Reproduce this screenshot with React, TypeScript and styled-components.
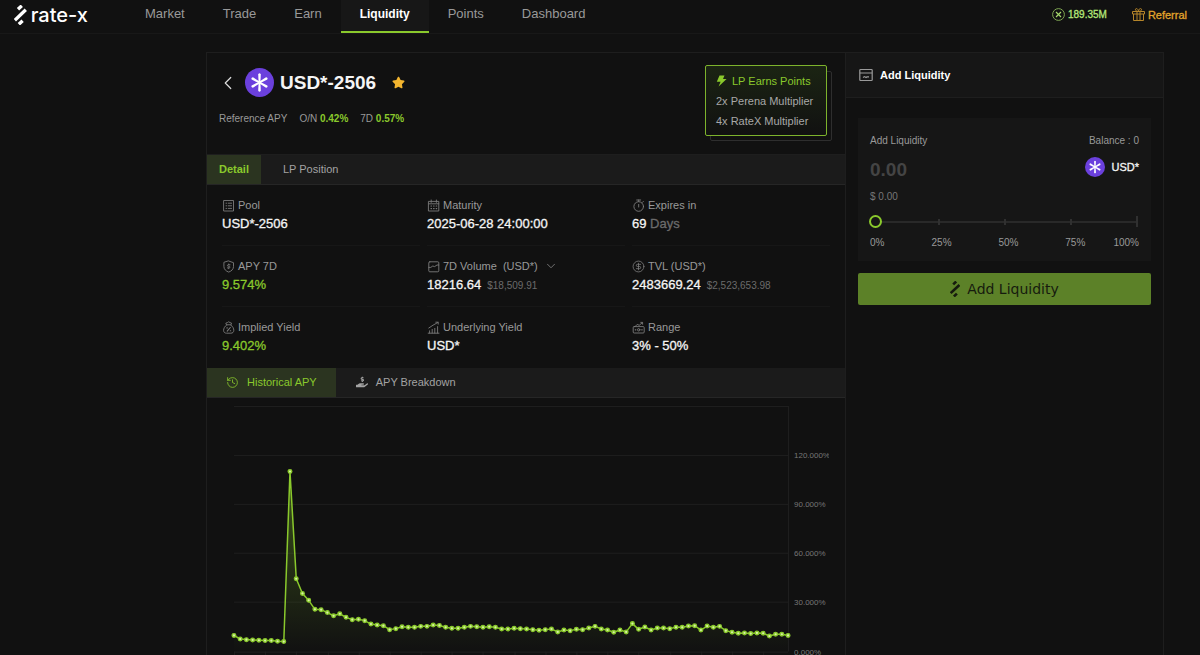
import React, { useState } from "react";
import styled, { createGlobalStyle } from "styled-components";
import { ChevronDown, ChevronLeft, CircleDollarSign, History } from "lucide-react";
import { FaHandHoldingUsd, FaStar } from "react-icons/fa";

const color = {
  page: "#111111",
  panel: "#161616",
  bar: "#1b1b1b",
  line: "#1e1e1e",
  faint: "#171717",
  green: "#8ac92c",
  text: "#999999",
  dim: "#6b6b6b",
  white: "#f5f5f5",
};

const GlobalStyle = createGlobalStyle`
  * { box-sizing: border-box; }
  body {
    margin: 0;
    background: ${color.page};
    color: ${color.text};
    font-family: "Liberation Sans", Arial, sans-serif;
    font-size: 11px;
    line-height: 16px;
  }
  button, input { font: inherit; color: inherit; margin: 0; }
  button { border: 0; padding: 0; background: none; cursor: pointer; }
  a { color: inherit; text-decoration: none; }
  h1, h2, dl, dd, dt, p, ul { margin: 0; padding: 0; font: inherit; }
  svg { flex: none; display: block; }
`;

const Shell = styled.div`
  height: 100vh;
  overflow: hidden;
`;

const TopBar = styled.header`
  display: flex;
  height: 34px;
  border-bottom: 1px solid #181818;
`;

const Brand = styled.a`
  display: flex;
  align-items: center;
  gap: 4px;
  width: 126px;
  padding: 0 0 4px 14px;
  color: #ffffff;
  font: 500 20px/24px Inter, sans-serif;
`;

const Nav = styled.nav`
  display: flex;
  flex: 1;
`;

const NavLink = styled.a<{ $active?: boolean }>`
  display: flex;
  align-items: center;
  padding: 0 19px ${(p) => (p.$active ? 3 : 5)}px;
  font-size: ${(p) => (p.$active ? 12 : 13)}px;
  font-weight: ${(p) => (p.$active ? 700 : 400)};
  color: ${(p) => (p.$active ? "#ffffff" : color.text)};
  background: ${(p) => (p.$active ? "#171717" : "none")};
  border-bottom: ${(p) => (p.$active ? `2px solid ${color.green}` : "0")};
`;

const Account = styled.div`
  display: flex;
  align-items: center;
  gap: 25px;
  padding: 0 13px 4px 0;
`;

const AccountItem = styled.a<{ $tone: string; $size: number }>`
  display: flex;
  align-items: center;
  gap: 3px;
  color: ${(p) => p.$tone};
  font-size: ${(p) => p.$size}px;
  -webkit-text-stroke: 0.3px;
`;

const Main = styled.main`
  display: grid;
  grid-template-columns: minmax(0, 1fr) 318px;
  margin: 18px 36px 0 206px;
  min-height: 100vh;
  border: 1px solid ${color.line};
`;

const PoolColumn = styled.section`
  min-width: 0;
`;

const PoolHeader = styled.div`
  display: flex;
  justify-content: space-between;
  padding: 12px 13px 13px 12px;
  height: 102px;
  border-bottom: 1px solid ${color.line};
`;

const TitleRow = styled.div`
  display: flex;
  align-items: center;
  height: 35px;
`;

const BackButton = styled.button`
  display: flex;
  justify-content: center;
  width: 18px;
  margin-right: 8px;
  color: #dddddd;
`;

const PoolName = styled.h1`
  margin: 0 16px 0 6px;
  color: ${color.white};
  font-size: 19px;
  line-height: 24px;
  font-weight: 700;
`;

const RateRow = styled.p`
  display: flex;
  gap: 12px;
  margin-top: 11px;
  font-size: 10px;
`;

const Rate = styled.b`
  color: ${color.green};
`;

const PointsBox = styled.div`
  position: relative;
  align-self: flex-start;
  min-width: 122px;
  margin-right: 5px;
  height: 71px;
  padding: 5px 10px;
  border: 1px solid #7db32c;
  border-radius: 2px;
  background: linear-gradient(#1b2413, ${color.page});
  line-height: 20px;
  color: #a8a8a8;

  &::after {
    content: "";
    position: absolute;
    z-index: -1;
    inset: 5px -6px -6px 4px;
    border: 1px solid #2e2e2e;
    border-radius: 2px;
  }
`;

const PointsTitle = styled.p`
  display: flex;
  align-items: center;
  gap: 5px;
  color: ${color.green};
`;

const TabBar = styled.div`
  display: flex;
  height: 30px;
  background: ${color.bar};
  border-bottom: 1px solid #262626;
`;

const Tab = styled.button<{ $active?: boolean; $pad: number; $bold?: boolean }>`
  display: flex;
  align-items: center;
  gap: 8px;
  padding: 0 ${(p) => p.$pad}px 1px;
  color: ${(p) => (p.$active ? color.green : "#a3a3a3")};
  background: ${(p) => (p.$active ? "#2b3420" : "none")};
  font-weight: ${(p) => (p.$bold ? 700 : 400)};
`;

const Facts = styled.dl`
  display: grid;
  grid-template-columns: repeat(3, 1fr);
  column-gap: 7px;
  padding: 0 15px;
`;

const Fact = styled.div<{ $last?: boolean }>`
  height: 61px;
  padding-top: 12px;
  border-bottom: 1px solid ${(p) => (p.$last ? "transparent" : color.faint)};
`;

const FactLabel = styled.dt`
  display: flex;
  align-items: center;
  gap: 3px;
  color: ${color.text};
  white-space: pre;
`;

const FactValue = styled.dd<{ $green?: boolean }>`
  font-size: 13px;
  line-height: 22px;
  color: ${(p) => (p.$green ? color.green : color.white)};
  -webkit-text-stroke: 0.3px;
`;

const Unit = styled.span`
  color: ${color.dim};
`;

const Fiat = styled.span`
  margin-left: 6px;
  font-size: 10px;
  color: ${color.dim};
  -webkit-text-stroke: 0;
`;

const ChartSvg = styled.svg`
  width: 100%;
  font-size: 8px;
`;

const SideColumn = styled.aside`
  border-left: 1px solid ${color.line};
`;

const SideHeader = styled.div`
  display: flex;
  align-items: center;
  gap: 7px;
  height: 45px;
  padding: 0 13px;
  background: ${color.panel};
  border-bottom: 1px solid ${color.line};
`;

const SideTitle = styled.h2`
  color: #ffffff;
  font-weight: 700;
`;

const Form = styled.form`
  padding: 20px 12px;
`;

const Card = styled.div`
  padding: 15px 12px 10px;
  background: ${color.panel};
  font-size: 10px;
`;

const Split = styled.div`
  display: flex;
  justify-content: space-between;
`;

const AmountInput = styled.input`
  width: 140px;
  height: 28px;
  margin-top: 7px;
  padding: 0;
  border: 0;
  outline: 0;
  background: none;
  font-size: 19px;
  font-weight: 700;
  color: ${color.white};

  &::placeholder { color: #444444; opacity: 1; }
`;

const Token = styled.span`
  display: flex;
  align-items: center;
  gap: 6px;
  height: 22px;
  margin-top: 7px;
  color: ${color.white};
  font-size: 11px;
  -webkit-text-stroke: 0.3px;
`;

const FiatLine = styled.p`
  margin: 5px 0 8px;
  color: #777777;
`;

const SliderWrap = styled.div`
  display: grid;
  align-items: center;
  height: 17px;
  margin-left: -1px;

  > * { grid-area: 1 / 1; }
`;

const Ticks = styled.div`
  display: flex;
  align-items: center;
  justify-content: space-between;
  height: 2px;
  margin: 0 1px 0 3px;
  background: #292929;
`;

const Tick = styled.i<{ $height: number }>`
  width: 2px;
  height: ${(p) => p.$height}px;
  background: #303030;
`;

const Slider = styled.input`
  appearance: none;
  width: 100%;
  height: 17px;
  background: none;
  cursor: pointer;

  &::-webkit-slider-thumb {
    appearance: none;
    width: 13px;
    height: 13px;
    border: 2px solid ${color.green};
    border-radius: 50%;
    background: ${color.panel};
  }
`;

const Marks = styled.div`
  display: grid;
  grid-template-columns: 23fr 25fr 25fr 18fr auto;
  margin-top: 5px;
`;

const Submit = styled.button`
  display: flex;
  align-items: center;
  justify-content: center;
  gap: 7px;
  width: 100%;
  height: 32px;
  margin-top: 12px;
  border-radius: 2px;
  background: #5c8128;
  color: #161b0e;
  font: 14px/20px "DejaVu Sans", sans-serif;
`;

function BrandMark({ size }: { size: number }) {
  return (
    <svg width={(size * 12) / 19} height={size} viewBox="0 0 12 19" fill="none" stroke="currentColor" strokeWidth="3.2">
      <path d="M.8 14.400 11.200 4.600M3.800 4 7.400.7M4.600 18.300 8.200 15" />
    </svg>
  );
}

function TokenIcon({ size }: { size: number }) {
  return (
    <svg width={size} height={size} viewBox="0 0 29 29">
      <circle cx="14.5" cy="14.5" r="14.5" fill="#6b40dd" />
      <g fill="#ffffff">
        {[0, 60, 120, 180, 240, 300].map((angle) => (
          <path key={angle} transform={`rotate(${angle} 14.5 14.5)`} d="M13.600 14.500 13.200 6.200Q14.500 4.400 15.800 6.200L15.400 14.500Z" />
        ))}
      </g>
    </svg>
  );
}

function LineIcon({ children }: { children: React.ReactNode }) {
  return (
    <svg width="13" height="13" viewBox="0 0 13 13" fill="none" stroke="#7c7c7c" strokeWidth="0.9" strokeLinecap="round" strokeLinejoin="round">
      {children}
    </svg>
  );
}

const PoolIcon = () => (
  <LineIcon>
    <rect x="2" y="1.5" width="9.5" height="10.5" />
    <path d="M4 4.2h.6M4 6.8h.6M4 9.4h.6M6.2 4.2h3.4M6.2 6.8h3.4M6.2 9.4h3.4" />
  </LineIcon>
);
const CalendarIcon = () => (
  <LineIcon>
    <rect x="1.8" y="2.4" width="10" height="9.6" />
    <path d="M4.2 1v2.4M9.4 1v2.4M1.8 4.8h10" />
    <path d="M4 7h.5M6.6 7h.5M9.2 7h.5M4 9.6h.5M6.6 9.6h.5M9.2 9.6h.5" strokeWidth="1.2" />
  </LineIcon>
);
const TimerIcon = () => (
  <LineIcon>
    <circle cx="6.7" cy="7.5" r="4.8" />
    <path d="M4.7 1h4M6.7 1v1.6M10.4 3.4l1-1M6.7 5.4v2.6" />
  </LineIcon>
);
const ShieldIcon = () => (
  <LineIcon>
    <path d="M6.700 1 11.500 2.700v3.800c0 2.700-2 4.600-4.800 5.600C3.900 11.100 1.900 9.200 1.900 6.500V2.700Z" />
    <path d="M8 4.800H6.200c-1 0-1 1.500 0 1.500h1c1 0 1 1.600 0 1.600H5.500M6.700 4v.8M6.700 8v.7" />
  </LineIcon>
);
const VolumeIcon = () => (
  <LineIcon>
    <rect x="1.800" y="1.800" width="10" height="10" rx="1" />
    <path d="M1.800 7.400h2l2-1.400 1.800.6 2.400-1.600h1.800" />
  </LineIcon>
);
const BagIcon = () => (
  <LineIcon>
    <path d="M4.600 4C2.600 5.500 1.600 7.500 1.600 9.300c0 1.800 1.100 2.900 3 2.900h4.200c1.900 0 3-1.100 3-2.900C11.800 7.500 10.800 5.500 8.800 4ZM4.600 4 3.800 2.200 5.400 1.600 6.700.8 8 1.600l1.600.6L8.800 4" />
    <path d="M8.300 6.500 5.200 10.200M4.900 6.900h.4M8.300 9.800h.4" strokeWidth="1.100" />
  </LineIcon>
);
const GrowthIcon = () => (
  <LineIcon>
    <path d="M1.200 12.200h10.800M2.600 12V9.800M5.200 12V8.400M7.800 12V7.400M10.600 12V5.600M1.800 7 6 4.200 11 1.400M8.800 1.200h2.400v2" />
  </LineIcon>
);
const RangeIcon = () => (
  <LineIcon>
    <rect x="1.200" y="5.600" width="11" height="6.400" rx="1" />
    <path d="M3.200 5.400 5.200 3.400l2 .9 3-2.500M8.800 1.400h1.800v1.800" />
    <circle cx="6.700" cy="8.800" r="1.200" />
    <path d="M3.300 8.800h.5M9.700 8.800h.5" strokeWidth="1.200" />
  </LineIcon>
);

const history = [
  9.9, 7.7, 7.3, 7.1, 6.9, 6.7, 6.7, 6.3, 6.1, 110, 44.5, 35.5, 31.3, 25.8, 25.6, 23.8, 21.9, 23.1, 20.9, 19.5,
  19.7, 18.9, 16.8, 16.2, 15.8, 13.4, 14, 15.2, 14.8, 14.8, 15.4, 15.4, 16.2, 16, 14.8, 14.2, 14.2, 14.8, 15.4, 15.2,
  14.8, 15.2, 14.8, 13.8, 13.8, 14.2, 14, 13.8, 13.4, 13, 13.4, 13.8, 12, 13.2, 12.8, 13.6, 13.4, 14.4, 15.4, 13.8,
  13.2, 11.8, 13.2, 12, 17.1, 13.6, 15, 13.2, 14.4, 14.4, 14, 14.8, 14.8, 15.6, 15.8, 13.2, 15.6, 14.8, 15.4, 12.8,
  11.8, 11.2, 11.4, 11, 11.4, 11.2, 9.5, 10.6, 10.6, 9.9,
];

const plot = { left: 27, right: 582, top: 8, bottom: 254, max: 150 };

function HistoryChart() {
  const x = (i: number) => plot.left + ((plot.right - plot.left) * i) / (history.length - 1);
  const y = (v: number) => plot.bottom - ((plot.bottom - plot.top) * v) / plot.max;
  const line = history.map((v, i) => `${x(i).toFixed(1)},${y(v).toFixed(1)}`).join(" ");
  const gridY = (v: number) => Math.floor(y(v)) + 0.5;

  return (
    <ChartSvg viewBox="0 0 639 280" role="img" aria-label="Historical APY">
      <defs>
        <linearGradient id="area" x1="0" y1="0" x2="0" y2="1">
          <stop offset="0" stopColor={color.green} stopOpacity="0.35" />
          <stop offset="1" stopColor={color.green} stopOpacity="0" />
        </linearGradient>
      </defs>
      <g stroke="#1f1f1f">
        {[0, 30, 60, 90, 120, 150].map((v) => (
          <path key={v} d={`M${plot.left} ${gridY(v)}H${plot.right}`} />
        ))}
        <path d={`M${plot.right + 0.5} ${plot.top}V${plot.bottom}`} />
        {history.map((_, i) => (i % 5 === 0 ? <path key={i} d={`M${Math.round(x(i)) + 0.5} ${plot.bottom}v5`} /> : null))}
      </g>
      <polygon points={`${plot.left},${plot.bottom} ${line} ${plot.right},${plot.bottom}`} fill="url(#area)" />
      <polyline points={line} fill="none" stroke={color.green} strokeWidth="1.500" strokeLinejoin="round" />
      {history.map((v, i) => (
        <circle key={i} cx={x(i)} cy={y(v)} r="1.800" fill="#d8f0a8" stroke={color.green} strokeWidth="1.400" />
      ))}
      <svg x="588" y="0" width="35" height="280" fill="#777777">
        {[0, 30, 60, 90, 120].map((v) => (
          <text key={v} x="0" y={gridY(v) + 3}>{`${v}.000%`}</text>
        ))}
      </svg>
    </ChartSvg>
  );
}

const navItems = ["Market", "Trade", "Earn", "Liquidity", "Points", "Dashboard"];

export default function App() {
  const [amount, setAmount] = useState("");
  const [share, setShare] = useState(0);

  return (
    <Shell>
      <GlobalStyle />
      <TopBar>
        <Brand href="#">
          <BrandMark size={20} />
          rate-x
        </Brand>
        <Nav>
          {navItems.map((item) => (
            <NavLink key={item} href="#" $active={item === "Liquidity"}>
              {item}
            </NavLink>
          ))}
        </Nav>
        <Account>
          <AccountItem href="#" $tone="#b5e878" $size={10}>
            <svg width="13" height="13" viewBox="0 0 13 13" fill="none" stroke="#7fa653">
              <circle cx="6.500" cy="6.500" r="5.900" />
              <path d="m4 4 5 5M9 4 4 9" stroke="#a5d86c" strokeWidth="1.200" />
            </svg>
            189.35M
          </AccountItem>
          <AccountItem href="#" $tone="#e3a52c" $size={11}>
            <svg width="13" height="13" viewBox="0 0 13 13" fill="none" stroke="#b5852a">
              <path d="M.5 3.500h12v2.500H.5ZM1.500 6v6.500h10V6M5 3.500v9M8 3.500v9M6.500 3.500C3 3.500 2.800.6 4.400.6 5.600.6 6.500 2 6.500 3.500 6.500 2 7.400.6 8.600.6 10.200.6 10 3.500 6.500 3.500" />
            </svg>
            Referral
          </AccountItem>
        </Account>
      </TopBar>

      <Main>
        <PoolColumn>
          <PoolHeader>
            <div>
              <TitleRow>
                <BackButton aria-label="Back">
                  <ChevronLeft size={22} strokeWidth={1.3} />
                </BackButton>
                <TokenIcon size={29} />
                <PoolName>USD*-2506</PoolName>
                <FaStar size={13} color="#f3b52f" />
              </TitleRow>
              <RateRow>
                <span>Reference APY</span>
                <span>O/N <Rate>0.42%</Rate></span>
                <span>7D <Rate>0.57%</Rate></span>
              </RateRow>
            </div>
            <PointsBox>
              <PointsTitle>
                <svg width="11" height="12" viewBox="0 0 11 12" fill="currentColor">
                  <path d="M3.500.5h5L7 4h3.600L2.600 11.500 4.600 6.800H.8Z" />
                </svg>
                LP Earns Points
              </PointsTitle>
              <p>2x Perena Multiplier</p>
              <p>4x RateX Multiplier</p>
            </PointsBox>
          </PoolHeader>

          <TabBar>
            <Tab $active $bold $pad={12}>Detail</Tab>
            <Tab $pad={22}>LP Position</Tab>
          </TabBar>

          <Facts>
            <Fact>
              <FactLabel><PoolIcon />Pool</FactLabel>
              <FactValue>USD*-2506</FactValue>
            </Fact>
            <Fact>
              <FactLabel><CalendarIcon />Maturity</FactLabel>
              <FactValue>2025-06-28 24:00:00</FactValue>
            </Fact>
            <Fact>
              <FactLabel><TimerIcon />Expires in</FactLabel>
              <FactValue>69 <Unit>Days</Unit></FactValue>
            </Fact>
            <Fact>
              <FactLabel><ShieldIcon />APY 7D</FactLabel>
              <FactValue $green>9.574%</FactValue>
            </Fact>
            <Fact>
              <FactLabel>
                <VolumeIcon />{"7D Volume  (USD*) "}<ChevronDown size={14} strokeWidth={1.2} />
              </FactLabel>
              <FactValue>18216.64<Fiat>$18,509.91</Fiat></FactValue>
            </Fact>
            <Fact>
              <FactLabel><CircleDollarSign size={13} strokeWidth={1.5} color="#7c7c7c" />TVL (USD*)</FactLabel>
              <FactValue>2483669.24<Fiat>$2,523,653.98</Fiat></FactValue>
            </Fact>
            <Fact $last>
              <FactLabel><BagIcon />Implied Yield</FactLabel>
              <FactValue $green>9.402%</FactValue>
            </Fact>
            <Fact $last>
              <FactLabel><GrowthIcon />Underlying Yield</FactLabel>
              <FactValue>USD*</FactValue>
            </Fact>
            <Fact $last>
              <FactLabel><RangeIcon />Range</FactLabel>
              <FactValue>3% - 50%</FactValue>
            </Fact>
          </Facts>

          <TabBar>
            <Tab $active $pad={19}><History size={13} strokeWidth={1.5} />Historical APY</Tab>
            <Tab $pad={20}><FaHandHoldingUsd size={12} />APY Breakdown</Tab>
          </TabBar>
          <HistoryChart />
        </PoolColumn>

        <SideColumn>
          <SideHeader>
            <svg width="14" height="14" viewBox="0 0 14 14" fill="none" stroke="#9a9a9a" strokeWidth="1.200">
              <rect x=".8" y="1.500" width="12.400" height="11" rx=".8" />
              <path d="M.8 5h12.400M4 9.500l1.500-.9 1.500.9 1-.6H10" />
            </svg>
            <SideTitle>Add Liquidity</SideTitle>
          </SideHeader>
          <Form onSubmit={(e) => e.preventDefault()}>
            <Card>
              <Split>
                <label htmlFor="amount">Add Liquidity</label>
                <span>Balance : 0</span>
              </Split>
              <Split>
                <AmountInput id="amount" placeholder="0.00" value={amount} onChange={(e) => setAmount(e.target.value)} />
                <Token><TokenIcon size={20} />USD*</Token>
              </Split>
              <FiatLine>$ 0.00</FiatLine>
              <SliderWrap>
                <Ticks>
                  <Tick $height={0} />
                  <Tick $height={6} />
                  <Tick $height={6} />
                  <Tick $height={6} />
                  <Tick $height={11} />
                </Ticks>
                <Slider
                  type="range"
                  aria-label="Share of balance"
                  value={share}
                  onChange={(e) => setShare(Number(e.target.value))}
                />
              </SliderWrap>
              <Marks>
                <span>0%</span>
                <span>25%</span>
                <span>50%</span>
                <span>75%</span>
                <span>100%</span>
              </Marks>
            </Card>
            <Submit type="submit">
              <BrandMark size={16} />
              Add Liquidity
            </Submit>
          </Form>
        </SideColumn>
      </Main>
    </Shell>
  );
}
